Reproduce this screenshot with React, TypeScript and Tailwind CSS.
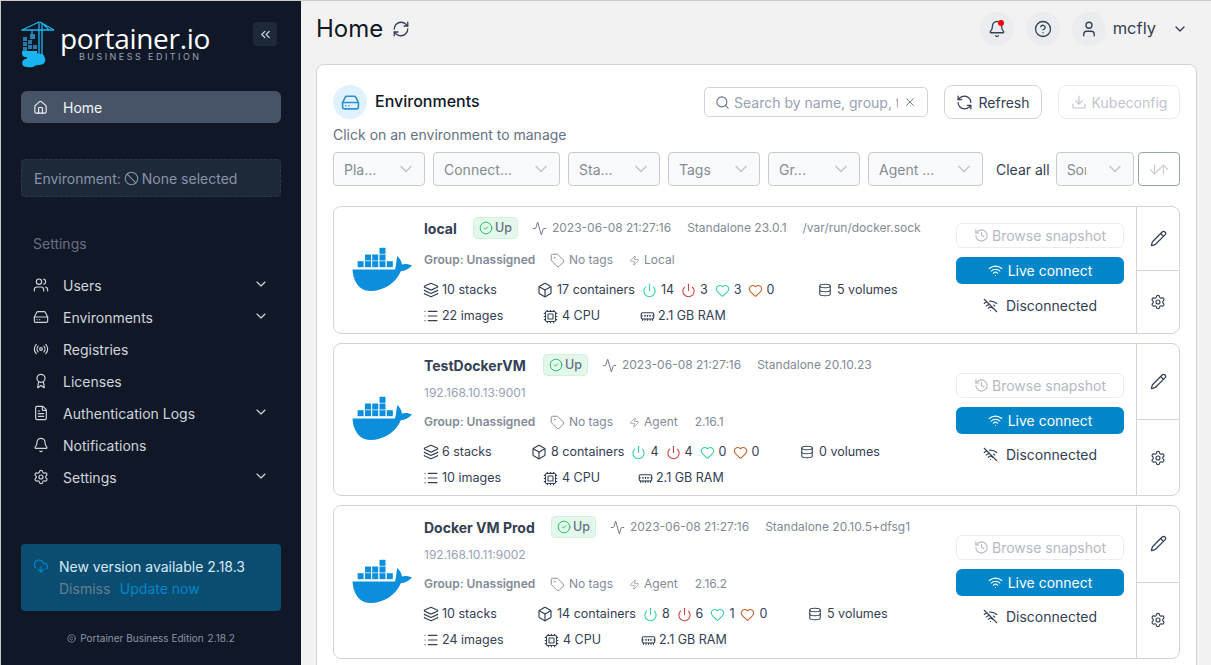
import * as React from "react";
import {
  Activity, Award, Ban, Bell, Box, ChevronDown, ChevronsLeft, CircleCheck, CircleHelp, CloudDownload, Copyright, Cpu, Database,
  Download, FileText, HardDrive, Heart, History, Home, Layers, List, MemoryStick, Pencil, Power, Radio, RefreshCcw, RefreshCw, Search,
  Settings, Tag, User, Users, Wifi, WifiOff, X, Zap, ArrowDown, ArrowUp,
} from "lucide-react";

const navItems = [
  { label: "Users", icon: Users, sub: true },
  { label: "Environments", icon: HardDrive, sub: true },
  { label: "Registries", icon: Radio, sub: false },
  { label: "Licenses", icon: Award, sub: false },
  { label: "Authentication Logs", icon: FileText, sub: true },
  { label: "Notifications", icon: Bell, sub: false },
  { label: "Settings", icon: Settings, sub: true },
];

const filters = [
  { label: "Pla...", width: "w-[92px]" },
  { label: "Connect...", width: "w-[127px]" },
  { label: "Sta...", width: "w-[92px]" },
  { label: "Tags", width: "w-[92px]" },
  { label: "Gr...", width: "w-[92px]" },
  { label: "Agent ...", width: "w-[115px]" },
];

const environments = [
  {
    name: "local", nameWidth: "w-[50px]", date: "2023-06-08 21:27:16", engine: "Standalone 23.0.1", socket: "/var/run/docker.sock",
    url: "", type: "Local", version: "", stacks: "10 stacks", containers: "17 containers", running: 14, stopped: 3, healthy: 3, unhealthy: 0,
    volumes: "5 volumes", images: "22 images", stacksW: "w-[114px]", groupW: "w-[280px]", imagesW: "w-[119px]", cpuW: "w-[97px]",
    cardH: "h-[128px]", actions: "pt-[16px]", discMt: "mt-[8px]", groupMt: "mt-[11px]",
  },
  {
    name: "TestDockerVM", nameWidth: "w-[120px]", date: "2023-06-08 21:27:16", engine: "Standalone 20.10.23", socket: "",
    url: "192.168.10.13:9001", type: "Agent", version: "2.16.1", stacks: "6 stacks", containers: "8 containers", running: 4, stopped: 4, healthy: 0, unhealthy: 0,
    volumes: "0 volumes", images: "10 images", stacksW: "w-[108px]", groupW: "w-[268px]", imagesW: "w-[119px]", cpuW: "w-[95px]",
    cardH: "h-[153px]", actions: "pt-[29px]", discMt: "mt-[7px]", groupMt: "mt-[9px]",
  },
  {
    name: "Docker VM Prod", nameWidth: "w-[128px]", date: "2023-06-08 21:27:16", engine: "Standalone 20.10.5+dfsg1", socket: "",
    url: "192.168.10.11:9002", type: "Agent", version: "2.16.2", stacks: "10 stacks", containers: "14 containers", running: 8, stopped: 6, healthy: 1, unhealthy: 0,
    volumes: "5 volumes", images: "24 images", stacksW: "w-[114px]", groupW: "w-[270px]", imagesW: "w-[120px]", cpuW: "w-[97px]",
    cardH: "h-[154px]", actions: "pt-[29px]", discMt: "mt-[7px]", groupMt: "mt-[9px]",
  },
];

const DockerLogo = () => (
  <svg width="60" height="44" viewBox="0 0 60 44" fill="#0b8fdc" aria-hidden="true">
    <rect x="27.5" y="0.8" width="6" height="6" />
    <rect x="13" y="7.5" width="6" height="6" />
    <rect x="20.2" y="7.5" width="6" height="6" />
    <rect x="27.5" y="7.5" width="6" height="6" />
    <rect x="5.6" y="14.2" width="6" height="6" />
    <rect x="13" y="14.2" width="6" height="6" />
    <rect x="20.2" y="14.2" width="6" height="6" />
    <rect x="27.5" y="14.2" width="6" height="6" />
    <rect x="34.8" y="14.2" width="6" height="6" />
    <path d="M0.5 22.5 H43 C44.5 18 44 13 45.5 9 C47.5 11 49.5 14 50 17.5 C53 16.5 57 17 60 18.5 C57 22 53 24 49 24 C44 36 32 44 18 44 C7 44 1 34 0.5 22.5 Z" />
  </svg>
);

const PortainerLogo = () => (
  <svg width="34" height="47" viewBox="0 0 34 47" fill="none" aria-hidden="true">
    <g stroke="#19b5f1" strokeWidth="1.2">
      <path d="M0.5 9 H33" strokeWidth="1.6" />
      <path d="M18 0.5 V34 M21 2 V34" strokeWidth="1.3" />
      <path d="M1 9 L18 1 M33 9 L19 1 M28 9 L21 2" />
      <path d="M11 9 V16" />
    </g>
    <rect x="9" y="13" width="5" height="5" fill="#2a85b8" />
    <g fill="#2a7aa8">
      <rect x="2" y="16" width="4" height="4" />
      <rect x="7" y="19" width="4" height="4" />
      <rect x="2" y="21" width="4" height="4" />
      <rect x="7" y="24" width="4" height="4" />
      <rect x="12" y="24" width="4" height="4" />
      <rect x="2" y="26" width="4" height="4" />
    </g>
    <path d="M1 30 H16 V36 H4 C1 36 1 32 1 30 Z" fill="#19b5f1" />
    <path d="M6 46 C2 46 0.5 43 1.5 40.5 C2 38.5 4 38 5.5 38 C6 33.5 9.5 30.5 13 31 C15 31.2 16.5 32 18 33 C21 32 23.5 34 23.5 36.5 C25 38 24.5 42.5 21 43.5 C19 44 16 44 14.5 44.5 C12 46.5 9 46.5 6 46 Z" fill="#19b5f1" />
  </svg>
);

const Sidebar = () => (
  <aside className="flex h-full w-[300px] shrink-0 flex-col bg-[#101827] px-[20px] pt-[20px]">
    <div className="flex h-[47px] items-start">
      <PortainerLogo />
      <div className="ml-[5px] flex w-[151px] flex-col items-start">
        <span className="mt-[2px] font-['Open_Sans',sans-serif] text-[28px] leading-[30px] tracking-[-0.3px] text-white">portainer.io</span>
        <span className="ml-[19px] mt-[-1px] text-[9px] leading-[10px] tracking-[2.45px] text-[#98a2b3]">BUSINESS EDITION</span>
      </div>
      <button className="ml-[42px] mt-[1px] flex h-[24px] w-[24px] items-center justify-center rounded-[4px] bg-[#1d2939] text-[#d0d5dd]">
        <ChevronsLeft size={15} />
      </button>
    </div>
    <div className="mt-[23px] flex h-[32px] w-[260px] items-center rounded-[6px] bg-[#475467] pl-[12px] text-[14px] text-[#f2f4f7]">
      <Home size={15} strokeWidth={1.75} />
      <span className="ml-[15px]">Home</span>
    </div>
    <div className="mt-[36px] flex h-[38px] w-[260px] items-center rounded-[4px] border border-dashed border-[#2b3648] bg-[#1d2939] pl-[12px] text-[14px] text-[#8a94a6]">
      <span>Environment:</span>
      <Ban size={15} strokeWidth={1.75} className="ml-[3px]" />
      <span className="ml-[3px]">None selected</span>
    </div>
    <div className="ml-[12px] mt-[37px] text-[14px] leading-[20px] text-[#667085]">Settings</div>
    <nav className="mt-[15px] flex w-[260px] flex-col">
      {navItems.map((item) => (
        <div key={item.label} className="flex h-[32px] items-center pl-[12px] pr-[12px] text-[14px] text-[#d0d5dd]">
          <span className="flex w-[15px] justify-center">
            <item.icon size={16} strokeWidth={1.75} className="shrink-0" />
          </span>
          <span className="ml-[15px]">{item.label}</span>
          {item.sub && <ChevronDown size={16} strokeWidth={1.75} className="ml-auto -translate-y-[1px]" />}
        </div>
      ))}
    </nav>
    <div className="mt-auto flex h-[67px] w-[260px] flex-col rounded-[4px] bg-[#0b4d70] pl-[12px] pt-[13px]">
      <div className="flex items-center text-[14px] leading-[20px] text-[#d5e9f5]">
        <CloudDownload size={16} strokeWidth={1.75} className="-translate-y-[1px] text-[#0086c9]" />
        <span className="ml-[10px]">New version available 2.18.3</span>
      </div>
      <div className="ml-[26px] mt-[2px] flex gap-[9.5px] text-[14px] leading-[20px]">
        <span className="text-[#667f8f]">Dismiss</span>
        <span className="text-[#0086c9]">Update now</span>
      </div>
    </div>
    <div className="mb-[20px] mt-[20px] flex items-center justify-center text-[10px] leading-[14px] text-[#8a94a6]">
      <Copyright size={9} />
      <span className="ml-[4px]">Portainer Business Edition</span>
      <span className="ml-[4px]">2.18.2</span>
    </div>
  </aside>
);

const Header = () => (
  <header className="flex h-[54px] items-center pl-[15px] pr-[23px] pt-[1px]">
    <h1 className="text-[24px] font-normal leading-[32px] text-[#101828]">Home</h1>
    <RefreshCw size={18} strokeWidth={1.75} className="ml-[9px] text-[#344054]" />
    <div className="relative ml-auto flex h-[34px] w-[34px] items-center justify-center rounded-full bg-[#eaecf0] text-[#344054]">
      <Bell size={18} strokeWidth={1.75} />
      <span className="absolute right-[10px] top-[8px] h-[6px] w-[6px] rounded-full bg-[#f00]" />
    </div>
    <div className="ml-[12px] flex h-[34px] w-[34px] items-center justify-center rounded-full bg-[#eaecf0] text-[#344054]">
      <CircleHelp size={18} strokeWidth={1.75} />
    </div>
    <div className="ml-[12px] flex h-[34px] w-[34px] items-center justify-center rounded-full bg-[#eaecf0] text-[#344054]">
      <User size={18} strokeWidth={1.75} />
    </div>
    <span className="ml-[7px] pb-[1px] text-[16.5px] text-[#344054]">mcfly</span>
    <ChevronDown size={16} strokeWidth={2} className="ml-[16px] text-[#344054]" />
  </header>
);

const Toolbar = () => (
  <div>
    <div className="flex h-[34px] items-center">
      <div className="flex h-[34px] w-[34px] items-center justify-center rounded-full bg-[#e0f2fe] text-[#2a93d5]">
        <HardDrive size={19} strokeWidth={2} />
      </div>
      <span className="ml-[8px] pb-[2px] text-[16px] font-medium text-[#101828]">Environments</span>
      <div className="ml-auto flex h-[30px] w-[224px] items-center rounded-[5px] border border-[#d0d5dd] bg-white pl-[10px] text-[14px] text-[#98a2b3]">
        <Search size={15} strokeWidth={1.75} className="shrink-0 text-[#667085]" />
        <span className="ml-[4px] w-[164px] overflow-hidden whitespace-nowrap">Search by name, group, tag, status, URL...</span>
        <X size={14} strokeWidth={1.5} className="ml-[5px] shrink-0 text-[#667085]" />
      </div>
      <button className="ml-[16px] flex h-[34px] w-[98px] items-center justify-center gap-[5px] rounded-[8px] border border-[#d0d5dd] bg-white text-[14px] text-[#344054]">
        <RefreshCcw size={17} strokeWidth={1.75} />
        <span>Refresh</span>
      </button>
      <button className="ml-[16px] flex h-[34px] w-[122px] items-center justify-center gap-[5px] rounded-[8px] border border-[#eaecf0] bg-white text-[14px] text-[#c0c5ce]">
        <Download size={16} strokeWidth={1.75} />
        <span>Kubeconfig</span>
      </button>
    </div>
    <p className="mt-[6px] text-[14px] leading-[20px] text-[#667085]">Click on an environment to manage</p>
    <div className="mt-[7px] flex h-[34px] items-center gap-[8px]">
      {filters.map((filter) => (
        <div key={filter.label} className={`${filter.width} flex h-[34px] items-center justify-between rounded-[4px] border border-[#c8ccd2] bg-[#f9fafb] pl-[10px] pr-[8px] text-[14px] text-[#858b95]`}>
          <span>{filter.label}</span>
          <ChevronDown size={20} strokeWidth={2} className="text-[#c4c7cc]" />
        </div>
      ))}
      <span className="ml-[5px] text-[14px] text-[#344054]">Clear all</span>
      <div className="ml-[-2px] flex h-[34px] w-[78px] items-center justify-between rounded-[4px] border border-[#c8ccd2] bg-[#f9fafb] pl-[10px] pr-[8px] text-[14px] text-[#858b95]">
        <span className="w-[19px] overflow-hidden whitespace-nowrap">Sort</span>
        <ChevronDown size={20} strokeWidth={2} className="text-[#c4c7cc]" />
      </div>
      <div className="ml-[-4px] flex h-[34px] w-[42px] items-center justify-center rounded-[4px] border border-[#98a2b3] bg-white text-[#c8ccd2]">
        <ArrowDown size={15} strokeWidth={1.75} className="-mr-[3px]" />
        <ArrowUp size={15} strokeWidth={1.75} className="-ml-[3px]" />
      </div>
    </div>
  </div>
);

type Env = (typeof environments)[number];

const EnvironmentCard = ({ env }: { env: Env }) => (
  <div className={`${env.cardH} flex overflow-hidden rounded-[8px] border border-[#d0d5dd] bg-white`}>
    <div className="flex w-[90px] shrink-0 items-center pb-[3px] pl-[18px]">
      <DockerLogo />
    </div>
    <div className="flex flex-1 flex-col text-[12.5px] text-[#344054]">
      <div className="mt-[10px] flex h-[22px] items-center text-[12px]">
        <span className={`${env.nameWidth} text-[14px] font-bold text-[#344054]`}>{env.name}</span>
        <span className="flex h-[20px] items-center gap-[2px] rounded-[3px] bg-[#e3f8ea] px-[5px] text-[12.5px] font-medium text-[#667085] outline outline-[#d1f2dd]">
          <CircleCheck size={14} strokeWidth={1.5} className="text-[#12b76a]" />
          Up
        </span>
        <Activity size={15} strokeWidth={1.5} className="ml-[15px] text-[#667085]" />
        <span className="ml-[5px] text-[#828a96]">{env.date}</span>
        <span className="ml-[16px] text-[#828a96]">{env.engine}</span>
        {env.socket && <span className="ml-[16px] text-[#828a96]">{env.socket}</span>}
      </div>
      {env.url && <div className="mt-[7px] h-[20px] text-[12px] leading-[20px] text-[#98a2b3]">{env.url}</div>}
      <div className={`${env.groupMt} flex h-[20px] items-center text-[12px] text-[#828a96]`}>
        <span className="w-[126px] font-semibold">Group: Unassigned</span>
        <Tag size={15} strokeWidth={1.5} />
        <span className="ml-[4px] w-[60px]">No tags</span>
        <Zap size={11} strokeWidth={1.5} />
        <span className="ml-[4px]">{env.type}</span>
        {env.version && <span className="ml-[17px]">{env.version}</span>}
      </div>
      <div className="mt-[10px] flex h-[20px] items-center">
        <span className={`${env.stacksW} flex items-center gap-[3px]`}>
          <Layers size={16} strokeWidth={1.75} className="-ml-[1px]" />
          {env.stacks}
        </span>
        <span className={`${env.groupW} flex items-center`}>
          <Box size={16} strokeWidth={1.75} className="-ml-[1px]" />
          <span className="ml-[4px]">{env.containers}</span>
          <Power size={15} strokeWidth={1.75} className="ml-[7px] text-[#34d399]" />
          <span className="ml-[4px]">{env.running}</span>
          <Power size={15} strokeWidth={1.75} className="ml-[7px] text-[#d14343]" />
          <span className="ml-[4px]">{env.stopped}</span>
          <Heart size={15} strokeWidth={1.75} className="ml-[7px] text-[#34d399]" />
          <span className="ml-[4px]">{env.healthy}</span>
          <Heart size={15} strokeWidth={1.75} className="ml-[6px] text-[#c2622d]" />
          <span className="ml-[4px]">{env.unhealthy}</span>
        </span>
        <span className="flex items-center gap-[5px]">
          <Database size={14} strokeWidth={1.75} />
          {env.volumes}
        </span>
      </div>
      <div className="mt-[6px] flex h-[20px] items-center">
        <span className={`${env.imagesW} flex items-center gap-[3px]`}>
          <List size={16} strokeWidth={1.75} className="-ml-[1px]" />
          {env.images}
        </span>
        <span className={`${env.cpuW} flex items-center gap-[4px]`}>
          <Cpu size={15} strokeWidth={1.75} />
          4 CPU
        </span>
        <span className="flex items-center gap-[3px]">
          <MemoryStick size={15} strokeWidth={1.75} />
          2.1 GB RAM
        </span>
      </div>
    </div>
    <div className={`${env.actions} flex w-[168px] shrink-0 flex-col`}>
      <div className="mb-[9px] flex h-[25px] items-center justify-center gap-[3px] rounded-[6px] border border-[#eaecf0] text-[14px] text-[#b4b9c2]">
        <History size={15} strokeWidth={1.75} />
        Browse snapshot
      </div>
      <div className="flex h-[27px] items-center justify-center gap-[5px] rounded-[6px] bg-[#0086c9] text-[14px] text-white">
        <Wifi size={15} strokeWidth={1.75} />
        Live connect
      </div>
      <div className={`${env.discMt} flex h-[26px] items-center justify-center gap-[8px] text-[14px] text-[#344054]`}>
        <WifiOff size={15} strokeWidth={1.75} />
        Disconnected
      </div>
    </div>
    <div className="ml-[12px] flex w-[43px] shrink-0 flex-col border-l border-[#d0d5dd] text-[#344054]">
      <div className="flex flex-1 items-center justify-center border-b border-[#d0d5dd]">
        <Pencil size={17} strokeWidth={1.75} />
      </div>
      <div className="flex flex-1 items-center justify-center">
        <Settings size={16} strokeWidth={1.75} />
      </div>
    </div>
  </div>
);

export default function App() {
  return (
    <div className="flex h-[665px] w-[1211px] overflow-hidden border-l border-t border-[#c9c9c9] bg-[#f2f2f2] font-['Inter',sans-serif]">
      <Sidebar />
      <main className="flex min-w-0 flex-1 flex-col">
        <Header />
        <section className="mb-[-40px] ml-[15px] mt-[9px] w-[881px] flex-1 rounded-t-[8px] border border-[#d0d5dd] bg-white px-[16px] pt-[20px]">
          <Toolbar />
          <div className="mt-[20px] flex flex-col gap-[9px]">
            {environments.map((env) => (
              <EnvironmentCard key={env.name} env={env} />
            ))}
          </div>
        </section>
      </main>
    </div>
  );
}
